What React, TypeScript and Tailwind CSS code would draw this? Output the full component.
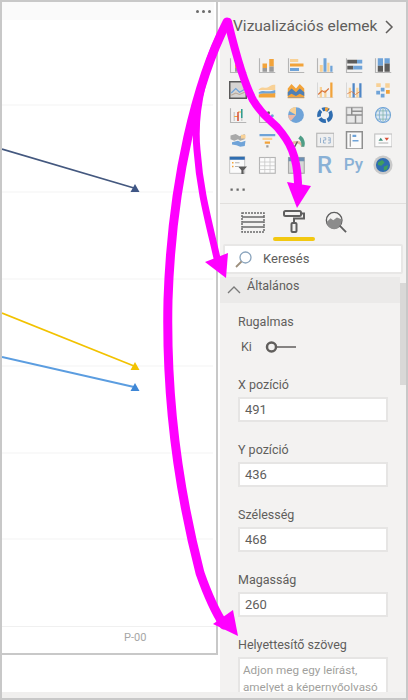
import React from "react";

const OR = "#f2a33a";
const LO = "#f8d196";
const BL = "#6fa3d8";
const GR = "#9a9a9a";
const DK = "#5c5c5c";

const baseL = <path d="M2 3v19h21" fill="none" stroke="#b5b5b5" strokeWidth="1.5" />;

const icons: React.ReactNode[] = [
  // row 1
  <>{baseL}<rect x="8" y="6" width="7" height="5" fill={OR} /><rect x="8" y="11" width="11" height="5" fill={OR} /><rect x="8" y="16" width="5" height="5" fill={GR} /></>,
  <>{baseL}<rect x="6" y="10" width="6" height="6" fill={OR} /><rect x="6" y="16" width="6" height="5" fill={GR} /><rect x="15" y="4" width="6" height="10" fill={OR} /><rect x="15" y="14" width="6" height="7" fill={GR} /></>,
  <>{baseL}<rect x="4" y="4" width="11" height="4" fill={LO} /><rect x="4" y="10" width="18" height="4" fill={OR} /><rect x="4" y="16" width="12" height="4" fill={BL} /></>,
  <>{baseL}<rect x="5" y="12" width="4" height="9" fill={LO} /><rect x="10" y="3" width="4" height="18" fill={BL} /><rect x="15" y="9" width="3" height="12" fill={LO} /><rect x="19" y="13" width="3" height="8" fill={BL} /></>,
  <>{baseL}<rect x="3" y="5" width="13" height="5" fill={DK} /><rect x="16" y="5" width="7" height="5" fill={BL} /><rect x="3" y="13" width="8" height="5" fill={DK} /><rect x="11" y="13" width="12" height="5" fill={BL} /></>,
  <>{baseL}<rect x="5" y="3" width="7" height="10" fill={BL} /><rect x="5" y="13" width="7" height="8" fill={DK} /><rect x="14" y="3" width="7" height="7" fill={BL} /><rect x="14" y="10" width="7" height="11" fill={DK} /></>,
  // row 2
  <><rect x="1" y="1" width="22" height="22" fill="#d6d4d2" stroke="#5a5a5a" strokeWidth="2" /><path d="M3 16l6-6 5 5 7-4" fill="none" stroke={BL} strokeWidth="1.5" /><path d="M3 19l6-3 5 2 7-3" fill="none" stroke="#b9a99a" strokeWidth="1.5" /></>,
  <><path d="M1 11c6-5 9 0 13-3s6-3 9-3v7H1z" fill={LO} /><path d="M1 15c6-4 12 1 22-3v5H1z" fill={BL} /><path d="M1 18c8-3 14 0 22-2v6H1z" fill={OR} /></>,
  <><path d="M1 10l5-6 6 6 5-6 6 6v13H1z" fill={OR} /><path d="M1 15l5-5 6 5 5-5 6 5v5l-6-3-5 3-6-3-5 3z" fill="#4f7fb5" /><path d="M1 22h22" stroke={GR} strokeWidth="1" /></>,
  <><path d="M2 2v20h21" fill="none" stroke="#cfcfcf" strokeWidth="1" /><rect x="5" y="8" width="3" height="14" fill={LO} /><rect x="11" y="12" width="3" height="10" fill={LO} /><rect x="19" y="2" width="3" height="20" fill={OR} /><path d="M3 18l5-5 4 2 5-5" fill="none" stroke="#d9743a" strokeWidth="1.5" /></>,
  <><path d="M2 2v20h21" fill="none" stroke="#cfcfcf" strokeWidth="1" /><rect x="5" y="9" width="3" height="13" fill={LO} /><rect x="10" y="3" width="3" height="19" fill="#4f86c6" /><rect x="15" y="9" width="3" height="13" fill={LO} /><rect x="19" y="3" width="3" height="19" fill="#4f86c6" /><path d="M3 17l6-3 5 4 6-4" fill="none" stroke="#d9743a" strokeWidth="1" /></>,
  <><rect x="3" y="3" width="6" height="5" fill={LO} /><rect x="15" y="3" width="6" height="6" fill={LO} /><rect x="9" y="9" width="5" height="5" fill={BL} /><rect x="3" y="13" width="5" height="5" fill={BL} /><rect x="16" y="12" width="5" height="5" fill={OR} /><rect x="9" y="17" width="5" height="5" fill={BL} /></>,
  // row 3
  <>{baseL}<path d="M7 20V8M12 20V12M17 20V4" stroke="#cfcfcf" strokeWidth="2" /><path d="M7 14h5M12 8h5" stroke={OR} strokeWidth="1.5" /><path d="M17 4v12" stroke="#2f9e8f" strokeWidth="2" /><path d="M12 8v12" stroke="#d9533a" strokeWidth="2" /></>,
  <>{baseL}<circle cx="8" cy="14" r="2.5" fill={BL} /><circle cx="14" cy="9" r="2" fill={DK} /><circle cx="19" cy="13" r="2" fill={BL} /></>,
  <><circle cx="12" cy="12" r="10.5" fill={BL} /><path d="M12 12L3 6.5A10.5 10.5 0 0 1 12 1.5z" fill={LO} /><path d="M12 12L1.5 12A10.5 10.5 0 0 0 5 20z" fill="#ecb7a5" /></>,
  <><circle cx="12" cy="12" r="8" fill="none" stroke="#2f6db0" strokeWidth="5" strokeDasharray="9 2" /><path d="M12 4a8 8 0 0 1 8 8" fill="none" stroke={OR} strokeWidth="5" strokeDasharray="4 30" /></>,
  <><rect x="2" y="2" width="21" height="21" fill="#e8e8e8" stroke="#a9a9a9" strokeWidth="2" /><path d="M9 2v10M2 12h21M14 12v11M9 7h14" stroke="#8f8f8f" strokeWidth="2" fill="none" /></>,
  <><circle cx="12" cy="12" r="10" fill="#dbe8f3" stroke={BL} strokeWidth="1.5" /><path d="M2 12h20M12 2v20M4 6.5h16M4 17.5h16" stroke="#7fb0a8" strokeWidth="1" /><ellipse cx="12" cy="12" rx="5" ry="10" fill="none" stroke={BL} strokeWidth="1" /></>,
  // row 4
  <><path d="M2 6l7-2 5 3 7-3v7l-6 2-3-2-5 2-5-2z" fill="#a9a9a9" /><path d="M4 15l8-2 4 2 6-2-1 7-6 1-5-2-6-1z" fill={BL} /><path d="M16 5h6v5h-6z" fill={LO} /></>,
  <><path d="M2 4h21v3H2z" fill={BL} /><path d="M6 9h13v3H6z" fill={LO} /><path d="M9 14h7v3H9z" fill={OR} /><path d="M11 19h3v3h-3z" fill={GR} /></>,
  <><path d="M2 21a11 11 0 0 1 21 0h-4a7 7 0 0 0-13 0z" fill="#e8b9a0" /><path d="M19 21a11 11 0 0 0-4-11l3-4a13 13 0 0 1 5 15z" fill="#4e9d86" /><path d="M9 23l5-9" stroke={DK} strokeWidth="2" /></>,
  <><rect x="1" y="3" width="23" height="18" fill="#efefef" stroke="#b5b5b5" strokeWidth="1.5" /><path d="M6 9v7M10 9h3v3h-3v4h3M16 9h3v3h-3M19 12v4h-3" stroke="#7c9fc4" strokeWidth="1" fill="none" /></>,
  <><rect x="2" y="1" width="21" height="23" fill="#fbfbfb" stroke="#8f8f8f" strokeWidth="2" /><path d="M7 4v17" stroke="#8f8f8f" strokeWidth="1.5" /><rect x="10" y="5" width="5" height="3" fill={BL} /><rect x="10" y="12" width="8" height="2" fill={BL} /></>,
  <><rect x="1" y="4" width="23" height="17" fill="#fbfbfb" stroke="#c2c2c2" strokeWidth="1.5" /><path d="M6 13l3-4 3 4z" fill="#3f8f7a" /><path d="M14 9h6l-3 4z" fill="#d9533a" /><path d="M6 16h13" stroke={GR} strokeWidth="1" /></>,
  // row 5
  <><rect x="1" y="1" width="20" height="22" fill="#fbfbfb" stroke="#b5b5b5" strokeWidth="1" /><rect x="1" y="1" width="20" height="4" fill="#2f6db0" /><rect x="4" y="8" width="2" height="2" fill={OR} /><rect x="4" y="13" width="2" height="2" fill={OR} /><path d="M8 9h6M8 14h4" stroke={GR} strokeWidth="1" /><path d="M12 14h12l-4.500 5v5h-3v-5z" fill={DK} /></>,
  <><rect x="2" y="2" width="21" height="21" fill="#fbfbfb" stroke="#b5b5b5" strokeWidth="1.5" /><path d="M2 8h21M2 13h21M2 18h21M9 2v21M16 2v21" stroke="#c5c5c5" strokeWidth="1" /></>,
  <><rect x="2" y="2" width="21" height="21" fill="#d8d8d8" stroke="#a9a9a9" strokeWidth="1.500" /><rect x="2" y="2" width="21" height="5" fill="#6c8fb3" /></>,
];

function VizGrid() {
  return (
    <div className="grid grid-cols-[repeat(6,29px)] auto-rows-[25px] pl-[3px]">
      {icons.map((icon, i) => (
        <div key={i} className="flex items-center justify-center">
          <svg width="18" height="18" viewBox="0 0 24 24">{icon}</svg>
        </div>
      ))}
      <div className="flex items-center justify-center col-start-4 row-start-5">
        <span className="text-[24px] leading-none font-medium text-[#8ab1d6]">R</span>
      </div>
      <div className="flex items-center justify-center col-start-5 row-start-5">
        <span className="text-[17px] leading-none font-medium text-[#8ab1d6]">Py</span>
      </div>
      <div className="flex items-center justify-center col-start-6 row-start-5">
        <svg width="20" height="20" viewBox="0 0 24 24">
          <circle cx="12" cy="12" r="11.500" fill="#c9c9c9" />
          <circle cx="12" cy="12" r="8.500" fill="#2f6db0" />
          <path d="M6 9l5-3 3 3-4 4-4-1zM13 14l5-2-1 5-4 2z" fill="#3f9e5f" />
        </svg>
      </div>
      <div className="flex items-center justify-center">
        <svg width="18" height="18" viewBox="0 0 24 24"><rect x="2" y="10" width="3" height="3" fill="#6b6b6b" /><rect x="10" y="10" width="3" height="3" fill="#6b6b6b" /><rect x="18" y="10" width="3" height="3" fill="#6b6b6b" /></svg>
      </div>
    </div>
  );
}

function Tabs() {
  return (
    <div className="flex pl-[13px] h-[36px]">
      <div className="w-[40px] flex items-center justify-center pb-[1px]">
        <svg width="24" height="22" viewBox="0 0 24 22" fill="none" stroke="#6b6b6b" strokeWidth="1.500">
          <path d="M1 2h22v4H1zM1 6h22v5H1zM1 11h22v5H1zM1 16h22v5H1z" strokeDasharray="2 1" />
        </svg>
      </div>
      <div className="w-[42px] flex flex-col items-center relative">
        <svg width="22" height="24" viewBox="0 0 22 24" fill="none" stroke="#5f5f5f" strokeWidth="2" className="mt-[5px]">
          <rect x="1" y="2" width="17" height="5" rx="1.500" />
          <path d="M18 4.500h3v5H11v4" />
          <rect x="8.500" y="14" width="5" height="9" rx="1" />
        </svg>
        <div className="absolute bottom-[-1px] left-0 right-0 h-[4px] rounded-full bg-[#f2c811]" />
      </div>
      <div className="w-[41px] flex items-center justify-center pb-[1px]">
        <svg width="22" height="22" viewBox="0 0 24 24" fill="none">
          <circle cx="10" cy="10" r="8.500" stroke="#5f5f5f" strokeWidth="1.500" />
          <path d="M2 12l4-4 3 2 4-3 5 2v3a8 8 0 0 1-16 0z" fill="#8c8c8c" />
          <path d="M16 16l7 7" stroke="#5f5f5f" strokeWidth="2" />
        </svg>
      </div>
    </div>
  );
}

function Field({ label, value }: { label: string; value: string }) {
  return (
    <div className="mb-[19px]">
      <div className="text-[12.500px] leading-[18px] text-[#605e5c] mb-[3px]">{label}</div>
      <div className="w-[150px] h-[25px] bg-white border-2 border-[#e6e5e4] flex items-center pl-[5px] text-[13px] text-[#605e5c]">
        {value}
      </div>
    </div>
  );
}

function Pane() {
  return (
    <div className="w-[186px] h-full bg-[#f3f2f1] flex flex-col overflow-hidden">
      <div className="h-[50px] flex items-center justify-between pl-[13px] pr-[12px] shrink-0">
        <span className="text-[15.500px] text-[#605e5c] whitespace-nowrap">Vizualizációs elemek</span>
        <svg width="10" height="16" viewBox="0 0 10 16" fill="none" stroke="#605e5c" strokeWidth="1.500"><path d="M2 2l6 6-6 6" /></svg>
      </div>
      <VizGrid />
      <div className="h-px bg-[#e1dfdd] mt-[1px]" />
      <Tabs />
      <div className="mx-[3px] mt-[4px] h-[30px] w-[180px] bg-white border-2 border-[#e8e7e6] rounded-[2px] flex items-center pl-[10px] gap-[11px] shrink-0">
        <svg width="17" height="17" viewBox="0 0 17 17" fill="none">
          <circle cx="10.500" cy="6.500" r="5.500" stroke="#8aa4bd" strokeWidth="1.300" />
          <path d="M6.500 10.500L1 16" stroke="#9d8f7d" strokeWidth="1.800" />
        </svg>
        <span className="text-[13px] text-[#605e5c]">Keresés</span>
      </div>
      <div className="flex-1 flex min-h-0 mt-[3px]">
        <div className="flex-1 min-w-0 overflow-hidden">
          <div className="h-[27px] bg-[#ebeae9] flex items-center pl-[7px] gap-[6px] -mt-[1px]">
            <svg width="14" height="8" viewBox="0 0 14 8" fill="none" stroke="#7a7a7a" strokeWidth="1.300"><path d="M1 7l6-6 6 6" /></svg>
            <span className="text-[12.500px] text-[#605e5c] pb-[7px]">Általános</span>
          </div>
          <div className="pl-[18px] pt-[10px]">
            <div className="text-[12.500px] leading-[18px] text-[#605e5c]">Rugalmas</div>
            <div className="flex items-center gap-[13px] pl-[3px] mt-[7px] h-[18px] text-[12.500px] text-[#605e5c]">
              Ki
              <svg width="32" height="12" viewBox="0 0 32 12" fill="none" stroke="#605e5c">
                <circle cx="6.500" cy="6" r="4.500" strokeWidth="2.500" />
                <path d="M11 6h20" strokeWidth="1.500" />
              </svg>
            </div>
            <div className="h-[20px]" />
            <Field label="X pozíció" value="491" />
            <Field label="Y pozíció" value="436" />
            <Field label="Szélesség" value="468" />
            <Field label="Magasság" value="260" />
            <div className="text-[12.500px] leading-[18px] text-[#605e5c] mb-[3px]">Helyettesítő szöveg</div>
            <div className="w-[150px] h-[60px] bg-white border-2 border-[#e6e5e4] pl-[3px] pt-[3px] text-[11.700px] leading-[17px] text-[#a19f9d] whitespace-nowrap">
              <div>Adjon meg egy leírást,</div>
              <div>amelyet a képernyőolvasó</div>
            </div>
          </div>
        </div>
        <div className="w-[6px] shrink-0 mt-[6px]">
          <div className="h-[102px] bg-[#d9d8d7]" />
        </div>
      </div>
    </div>
  );
}

function Canvas() {
  return (
    <div className="w-[216px] h-[653px] border-r-2 border-b-2 border-[#c8c8c8] bg-white flex flex-col shrink-0">
      <div className="h-[18px] bg-[#fafafa] flex items-center justify-end pr-[3px] gap-[3px] shrink-0 mr-[2px]">
        <span className="w-[3px] h-[3px] rounded-full bg-[#6b6b6b]" />
        <span className="w-[3px] h-[3px] rounded-full bg-[#6b6b6b]" />
        <span className="w-[3px] h-[3px] rounded-full bg-[#6b6b6b]" />
      </div>
      <svg width="214" height="606" viewBox="2 20 214 606" className="shrink-0 block">
        {[105, 192, 279, 366, 453, 539].map((y) => (
          <line key={y} x1="2" x2="213" y1={y} y2={y} stroke="#f3f3f3" strokeWidth="1" />
        ))}
        <path d="M2 149L134 188" stroke="#44587f" strokeWidth="1.800" />
        <path d="M130.500 192L135 184L139.500 192z" fill="#3f5685" />
        <path d="M2 313L134 366" stroke="#f2c200" strokeWidth="1.800" />
        <path d="M130.500 370L135 362L139.500 370z" fill="#f2c200" />
        <path d="M2 357L134 387" stroke="#5b9de0" strokeWidth="1.800" />
        <path d="M130.500 391L135 383L139.500 391z" fill="#3f87d6" />
      </svg>
      <div className="flex-1 border-t border-[#f0f0f0] relative">
        <span className="absolute left-[122px] top-[3px] text-[11px] leading-[16px] text-[#a6a6a6]">P-00</span>
      </div>
    </div>
  );
}

export default function App() {
  return (
    <div className="relative w-[408px] h-[700px] border-2 border-[#c8c8c8] bg-white overflow-hidden flex flex-col font-['Roboto',sans-serif]">
      <div className="h-[690px] flex shrink-0">
        <Canvas />
        <div className="w-[2px]" />
        <Pane />
      </div>
      <div className="flex-1 bg-[#f0efee]" />
      {/* magenta arrows drawn over the screenshot */}
      <svg className="absolute left-[-2px] top-[-2px] pointer-events-none" width="408" height="700" viewBox="0 0 408 700" fill="none" stroke="#ff00ff" strokeLinecap="round">
        <path d="M227 22C197 80 172 180 168 300C166 390 176 480 200 573C206 590 214 610 224 625" strokeWidth="9" />
        <path d="M213 624L233 610L238 636z" fill="#ff00ff" stroke="none" />
        <path d="M227 22C205 60 193 110 197 150C200 190 207 215 217 258" strokeWidth="7" />
        <path d="M205 262L228 253L226 278z" fill="#ff00ff" stroke="none" />
        <path d="M228 22C236 55 245 85 253 100C262 115 270 120 277 127C290 142 297 155 298 183" strokeWidth="8" />
        <path d="M287 182L311 186L297 208z" fill="#ff00ff" stroke="none" />
      </svg>
    </div>
  );
}
